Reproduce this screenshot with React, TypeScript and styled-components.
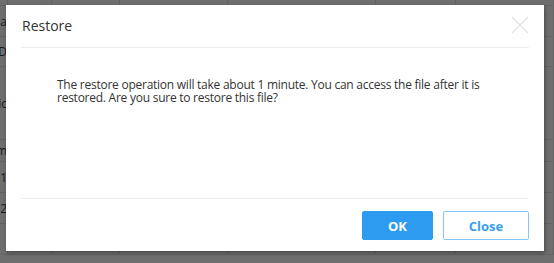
import React from 'react'
import styled, { createGlobalStyle } from 'styled-components'

const GlobalStyle = createGlobalStyle`
  html, body {
    margin: 0;
    padding: 0;
    background: #fff;
    font-family: "Open Sans", "Noto Sans", sans-serif;
  }
`

const Page = styled.div`
  position: relative;
  width: 554px;
  height: 263px;
  overflow: hidden;
  background: #fff;
`

const Table = styled.div`
  display: flex;
  flex-direction: column;
`

const Row = styled.div<{ $h: number }>`
  display: grid;
  grid-template-columns: 8px 44px 68px 108px 148px 80px 98px;
  height: ${(p) => p.$h}px;
  border-bottom: 1px solid #e6e6e6;
  font-size: 12px;
  color: #444;
`

const Cell = styled.div<{ $end?: boolean }>`
  display: flex;
  align-items: center;
  justify-content: ${(p) => (p.$end ? 'flex-end' : 'flex-start')};
  padding-left: ${(p) => (p.$end ? 0 : 4)}px;
  border-right: 1px solid #e6e6e6;
  white-space: nowrap;
  overflow: hidden;
`

const Mask = styled.div`
  position: absolute;
  inset: 0;
  background: rgba(0, 0, 0, 0.57);
`

const Dialog = styled.div`
  position: absolute;
  left: 6px;
  top: 5px;
  width: 538px;
  height: 246px;
  background: #fff;
  box-shadow: 1px 2px 4px rgba(0, 0, 0, 0.35);
  display: flex;
  flex-direction: column;
`

const Header = styled.div`
  display: flex;
  align-items: center;
  justify-content: space-between;
  height: 42px;
  margin: 0 15px;
  border-bottom: 1px solid #ededed;
`

const Title = styled.h2`
  margin: -1px 0 0 1px;
  font-size: 14px;
  font-weight: 400;
  color: #333;
`

const CloseIcon = styled.button`
  width: 18px;
  height: 18px;
  padding: 0;
  margin-top: -2px;
  border: none;
  background: none;
  display: flex;
`

const Body = styled.div`
  flex: 1;
  padding: 30px 40px 0 51px;
  font-size: 12px;
  line-height: 13px;
  letter-spacing: -0.25px;
  color: #333;
`

const Footer = styled.div`
  display: flex;
  justify-content: flex-end;
  gap: 10px;
  margin: 0 15px;
  padding: 12px 0 11px;
  border-top: 1px solid #f0f0f0;
`

const Button = styled.button<{ $primary?: boolean; $w: number }>`
  width: ${(p) => p.$w}px;
  height: 29px;
  border-radius: 2px;
  font-family: "Open Sans", "Noto Sans", sans-serif;
  font-size: 13px;
  font-weight: 700;
  border: 1px solid ${(p) => (p.$primary ? '#2d9bf0' : '#86c6f6')};
  background: ${(p) => (p.$primary ? '#2d9bf0' : '#fff')};
  color: ${(p) => (p.$primary ? '#fff' : '#3a9ef0')};
`

// rows of the page table lying behind the modal mask
const rows: { h: number; cells: string[] }[] = [
  { h: 5, cells: ['', '', '', '', '', '', ''] },
  { h: 30, cells: ['pa', '', '', '', '', '', ''] },
  { h: 29, cells: ['D', '', '', '', '', '', ''] },
  { h: 72, cells: ['ic', '', '', '', '', '', ''] },
  { h: 21, cells: ['m', '', '', '', '', '', ''] },
  { h: 30, cells: ['1', '', '', '', '', '', ''] },
  { h: 30, cells: ['2', '', '', '', '', '', ''] },
  { h: 30, cells: ['', '', '', '', '', '', ''] },
]

export default function App() {
  return (
    <Page>
      <GlobalStyle />
      <Table>
        {rows.map((r, i) => (
          <Row key={i} $h={r.h}>
            {r.cells.map((c, j) => (
              <Cell key={j} $end={j === 0}>{c}</Cell>
            ))}
          </Row>
        ))}
      </Table>
      <Mask />
      <Dialog>
        <Header>
          <Title>Restore</Title>
          <CloseIcon aria-label="close">
            <svg width="18" height="18" viewBox="0 0 18 18">
              <path d="M1 1 L17 17 M17 1 L1 17" stroke="#e3e3e3" strokeWidth="1.2" fill="none" />
            </svg>
          </CloseIcon>
        </Header>
        <Body>
          The restore operation will take about 1 minute. You can access the file after it is
          restored. Are you sure to restore this file?
        </Body>
        <Footer>
          <Button $primary $w={71}>OK</Button>
          <Button $w={86}>Close</Button>
        </Footer>
      </Dialog>
    </Page>
  )
}
